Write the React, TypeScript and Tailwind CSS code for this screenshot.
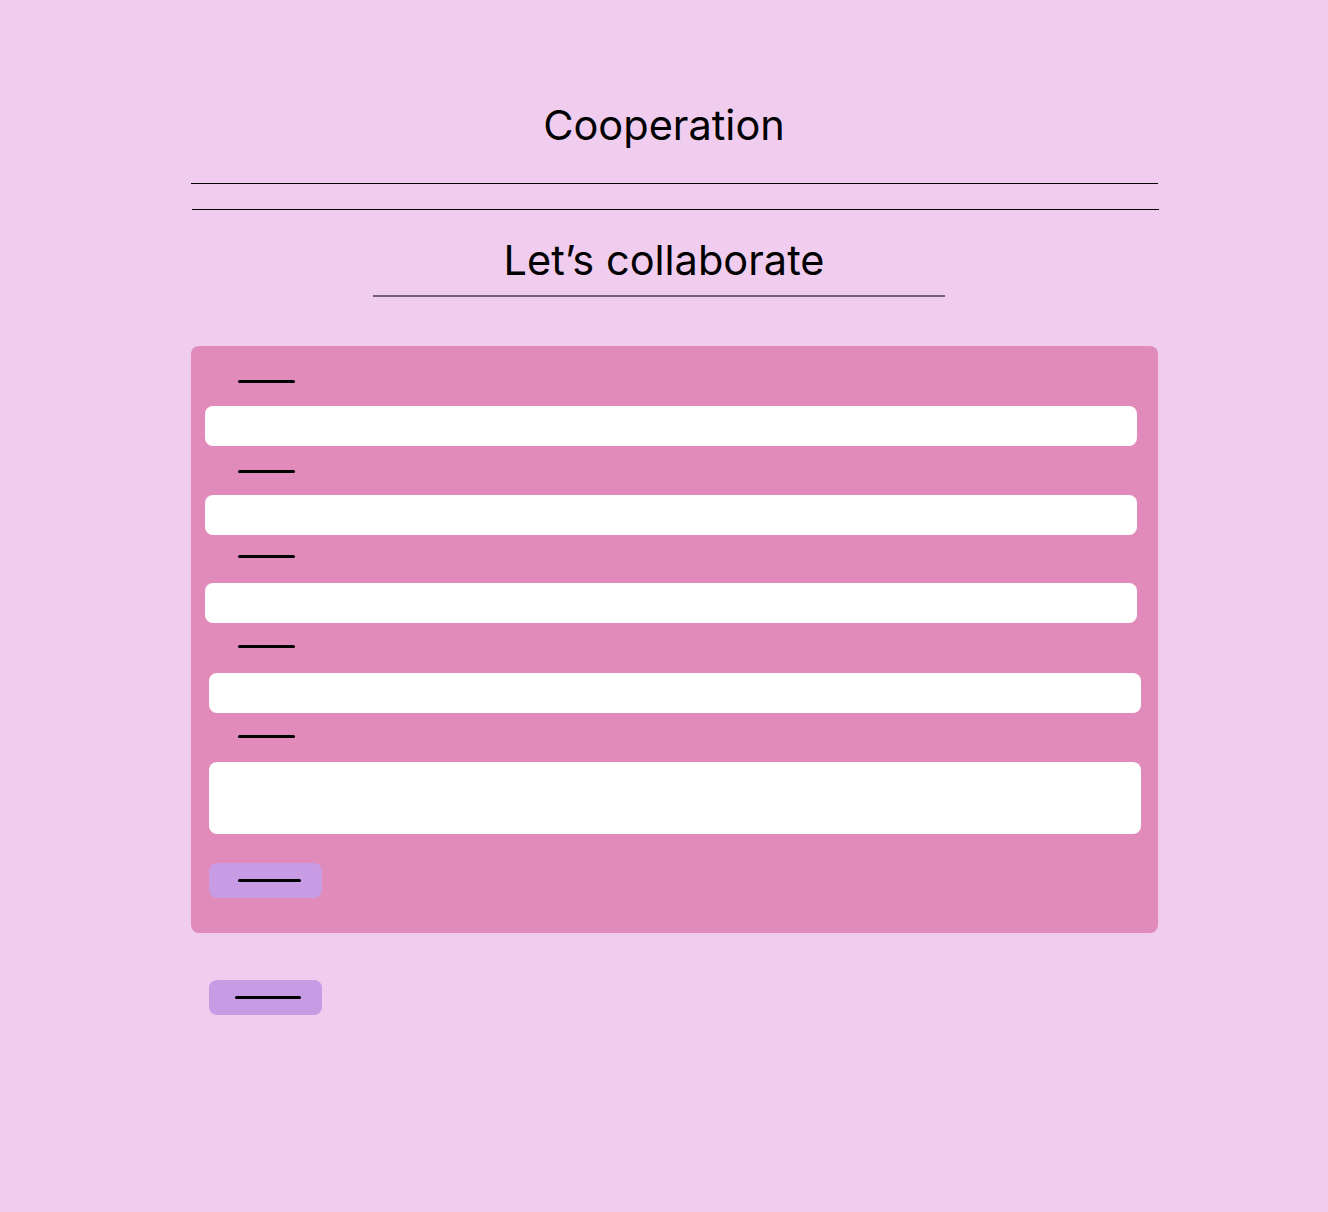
const Dash = ({ className = "" }: { className?: string }) => (
  <div className={`h-[3px] w-[57px] rounded-full bg-black ${className}`} />
);

const Field = ({ top, labelGap, inset, tall }: { top: string; labelGap: string; inset: string; tall?: boolean }) => (
  <div className={top}>
    <Dash className="ml-[47px]" />
    <div className={`${labelGap} ${inset} w-[932px] rounded-lg bg-white ${tall ? "h-[72px]" : "h-[40px]"}`} />
  </div>
);

export default function App() {
  return (
    <div className="min-h-[1212px] w-full bg-[#f0cdee] font-['Inter',sans-serif] text-black">
      <h1 className="pt-[99px] text-center text-[41.5px] leading-[52px]">Cooperation</h1>

      <div className="ml-[191px] mt-[32px] h-px w-[967px] bg-black" />
      <div className="ml-[192px] mt-[25px] h-px w-[967px] bg-black" />

      <h2 className="mt-[24px] text-center text-[41.5px] leading-[52px]">Let’s collaborate</h2>
      <div className="ml-[373px] mt-[9px] h-[2px] w-[572px] bg-[#75607a]" />

      <form className="ml-[191px] mt-[49px] flex w-[967px] flex-col rounded-lg bg-[#e18bbb] pb-[35px] pt-[34px]">
        <Field top="" labelGap="mt-[23px]" inset="ml-[14px]" />
        <Field top="mt-[24px]" labelGap="mt-[22px]" inset="ml-[14px]" />
        <Field top="mt-[20px]" labelGap="mt-[25px]" inset="ml-[14px]" />
        <Field top="mt-[22px]" labelGap="mt-[25px]" inset="ml-[18px]" />
        <Field top="mt-[22px]" labelGap="mt-[24px]" inset="ml-[18px]" tall />
        <button type="button" className="ml-[18px] mt-[29px] flex h-[35px] w-[113px] items-center rounded-lg bg-[#c89be5] pl-[29px]">
          <Dash className="w-[63px]" />
        </button>
      </form>

      <button type="button" className="ml-[209px] mt-[47px] flex h-[35px] w-[113px] items-center rounded-lg bg-[#c89be5] pl-[26px]">
        <Dash className="w-[66px]" />
      </button>
    </div>
  );
}
